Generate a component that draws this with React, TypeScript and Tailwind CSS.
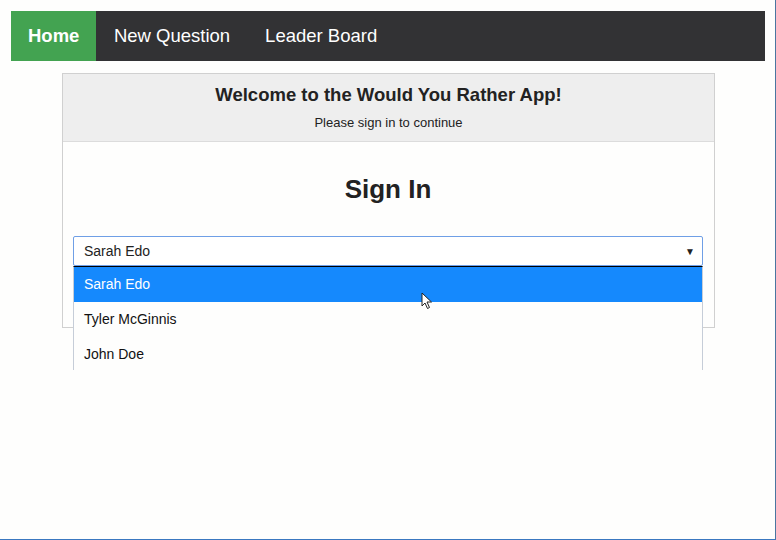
const users = ['Sarah Edo', 'Tyler McGinnis', 'John Doe'];

function Cursor() {
  return (
    <svg className="absolute left-[421px] top-[292px]" width="12" height="18" viewBox="0 0 12 18">
      <path d="M1 1 L1 14 L4 11 L6.5 16.5 L8.5 15.5 L6 10 L10.5 10 Z" fill="#fff" stroke="#222" strokeWidth="1" strokeLinejoin="round" />
    </svg>
  );
}

export default function App() {
  return (
    <div
      className="relative w-[776px] h-[540px] bg-[#fefefd] border-r border-b border-r-[#4a76a0] border-b-[#3a78c0] overflow-hidden"
      style={{ fontFamily: '"Liberation Sans", Arial, sans-serif' }}
    >
      <nav className="mx-[11px] mt-[11px] w-[754px] h-[50px] bg-[#323234] flex text-[18.5px] text-white">
        <a className="bg-[#43a351] px-[17px] flex items-center font-bold">Home</a>
        <a className="px-[17.5px] flex items-center">New Question</a>
        <a className="px-[17.5px] flex items-center">Leader Board</a>
      </nav>

      <div className="ml-[62px] mt-[12px] w-[653px] h-[255px] border border-[#d0d0d0] bg-[#fefefd] text-[#222]">
        <div className="bg-[#eeeeee] h-[68px] border-b border-[#dcdcdc] flex flex-col items-center pt-[10px]">
          <h3 className="text-[18.5px] font-bold leading-[22px]">Welcome to the Would You Rather App!</h3>
          <p className="text-[13px] leading-[16px] mt-[9px]">Please sign in to continue</p>
        </div>
        <div className="pl-[10px] pr-[11px]">
          <h1 className="text-[26px] font-bold text-center mt-[32px] leading-[30px]">Sign In</h1>
          <div className="mt-[32px] h-[30px] border border-[#6f9fe6] rounded-[2px] flex items-center justify-between pl-[10px] pr-[7px] text-[14px] bg-white">
            <span>Sarah Edo</span>
            <span className="text-[10px]">▼</span>
          </div>
          <button className="mt-[13px] w-full h-[34px] bg-[#43a351] text-white text-[14px] rounded-[2px]">Submit</button>
        </div>
      </div>

      <ul className="absolute left-[73px] top-[266px] w-[630px] h-[104px] overflow-hidden bg-[#fefefd] border-t border-t-black border-x border-x-[#c6cdd8] text-[14px] text-[#111]">
        {users.map((u, i) => (
          <li
            key={u}
            className={
              i === 0
                ? 'h-[35px] flex items-center pl-[10px] bg-[#1589fd] text-white'
                : 'h-[35px] flex items-center pl-[10px]'
            }
          >
            {u}
          </li>
        ))}
      </ul>

      <Cursor />
    </div>
  );
}
